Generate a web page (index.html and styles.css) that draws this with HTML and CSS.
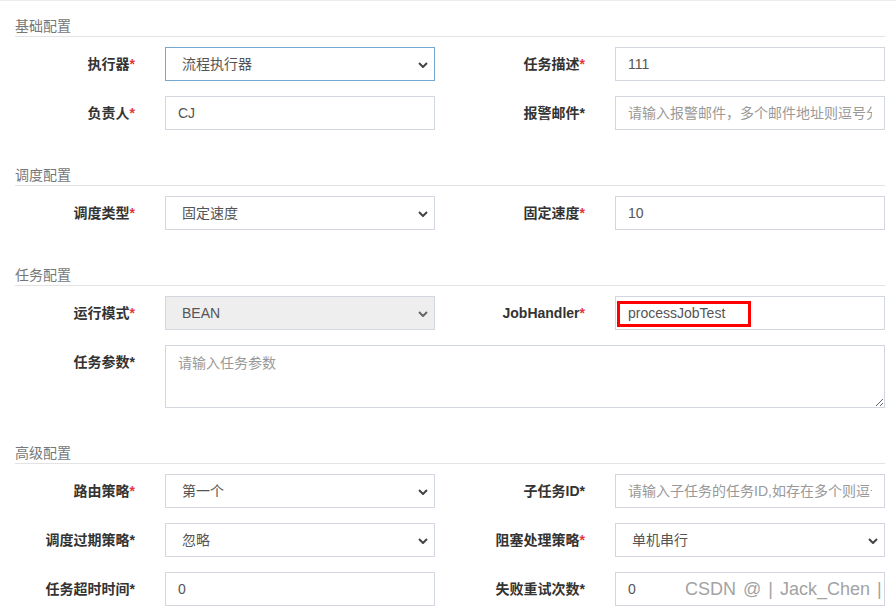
FILE: index.html
```html
<!DOCTYPE html>
<html lang="zh-CN">
<head>
<meta charset="utf-8">
<title>任务配置</title>
<link rel="stylesheet" href="styles.css">
</head>
<body>
<form class="form">
  <div class="section-title">基础配置</div>
  <div class="row">
    <div class="group">
      <label class="label">执行器<span class="req">*</span></label>
      <div class="control">
        <select class="input select focused"><option>流程执行器</option></select>
        <svg class="caret" width="10" height="6" viewBox="0 0 10 6"><path d="M1 1 L5 5 L9 1" fill="none" stroke="#444" stroke-width="2"/></svg>
      </div>
    </div>
    <div class="group">
      <label class="label">任务描述<span class="req">*</span></label>
      <div class="control"><input class="input" type="text" value="111"></div>
    </div>
  </div>
  <div class="row">
    <div class="group">
      <label class="label">负责人<span class="req">*</span></label>
      <div class="control"><input class="input" type="text" value="CJ"></div>
    </div>
    <div class="group">
      <label class="label">报警邮件<span>*</span></label>
      <div class="control"><input class="input" type="text" placeholder="请输入报警邮件，多个邮件地址则逗号分隔"></div>
    </div>
  </div>

  <div class="section-title">调度配置</div>
  <div class="row">
    <div class="group">
      <label class="label">调度类型<span class="req">*</span></label>
      <div class="control">
        <select class="input select"><option>固定速度</option></select>
        <svg class="caret" width="10" height="6" viewBox="0 0 10 6"><path d="M1 1 L5 5 L9 1" fill="none" stroke="#444" stroke-width="2"/></svg>
      </div>
    </div>
    <div class="group">
      <label class="label">固定速度<span class="req">*</span></label>
      <div class="control"><input class="input" type="text" value="10"></div>
    </div>
  </div>

  <div class="section-title">任务配置</div>
  <div class="row">
    <div class="group">
      <label class="label">运行模式<span class="req">*</span></label>
      <div class="control">
        <select class="input select" disabled><option>BEAN</option></select>
        <svg class="caret" width="10" height="6" viewBox="0 0 10 6"><path d="M1 1 L5 5 L9 1" fill="none" stroke="#666" stroke-width="2"/></svg>
      </div>
    </div>
    <div class="group">
      <label class="label">JobHandler<span class="req">*</span></label>
      <div class="control">
        <input class="input" type="text" value="processJobTest">
        <div class="highlight"></div>
      </div>
    </div>
  </div>
  <div class="row">
    <div class="group wide">
      <label class="label">任务参数<span>*</span></label>
      <div class="control"><textarea class="input textarea" placeholder="请输入任务参数"></textarea></div>
    </div>
  </div>

  <div class="section-title">高级配置</div>
  <div class="row">
    <div class="group">
      <label class="label">路由策略<span class="req">*</span></label>
      <div class="control">
        <select class="input select"><option>第一个</option></select>
        <svg class="caret" width="10" height="6" viewBox="0 0 10 6"><path d="M1 1 L5 5 L9 1" fill="none" stroke="#444" stroke-width="2"/></svg>
      </div>
    </div>
    <div class="group">
      <label class="label">子任务ID<span>*</span></label>
      <div class="control"><input class="input" type="text" placeholder="请输入子任务的任务ID,如存在多个则逗号分隔"></div>
    </div>
  </div>
  <div class="row">
    <div class="group">
      <label class="label">调度过期策略<span>*</span></label>
      <div class="control">
        <select class="input select"><option>忽略</option></select>
        <svg class="caret" width="10" height="6" viewBox="0 0 10 6"><path d="M1 1 L5 5 L9 1" fill="none" stroke="#444" stroke-width="2"/></svg>
      </div>
    </div>
    <div class="group">
      <label class="label">阻塞处理策略<span class="req">*</span></label>
      <div class="control">
        <select class="input select"><option>单机串行</option></select>
        <svg class="caret" width="10" height="6" viewBox="0 0 10 6"><path d="M1 1 L5 5 L9 1" fill="none" stroke="#444" stroke-width="2"/></svg>
      </div>
    </div>
  </div>
  <div class="row">
    <div class="group">
      <label class="label">任务超时时间<span>*</span></label>
      <div class="control"><input class="input" type="text" value="0"></div>
    </div>
    <div class="group">
      <label class="label">失败重试次数<span>*</span></label>
      <div class="control"><input class="input" type="text" value="0"></div>
    </div>
  </div>
</form>
<div class="watermark">CSDN @ | Jack_Chen |</div>
</body>
</html>
```

FILE: styles.css
```css
html, body {
  margin: 0;
  padding: 0;
  background: #fff;
}

body {
  font-family: "Liberation Sans", "Noto Sans CJK SC", sans-serif;
  font-size: 14px;
  color: #333;
  border-top: 1px solid #ececec;
  position: relative;
  height: 606px;
  overflow: hidden;
}

.form {
  display: flex;
  flex-direction: column;
  margin: 0;
}

.section-title {
  margin: 20px 11px 10px 15px;
  font-size: 14px;
  line-height: 20px;
  color: #777;
  border-bottom: 1px solid #e3e3e3;
}

.section-title:first-child {
  margin-top: 15px;
}

.row {
  display: flex;
  margin-bottom: 15px;
}

.group {
  display: flex;
  flex-shrink: 0;
  width: 450px;
}

.label {
  flex-shrink: 0;
  width: 135px;
  margin-right: 30px;
  text-align: right;
  font-weight: bold;
  font-size: 14px;
  line-height: 20px;
  padding-top: 7px;
  color: #333;
  white-space: nowrap;
}

.req {
  color: #e4393c;
}

.control {
  position: relative;
  flex-shrink: 0;
  width: 270px;
}

.group.wide {
  width: 885px;
}

.group.wide .control {
  width: 720px;
}

.input {
  display: block;
  width: 100%;
  height: 34px;
  box-sizing: border-box;
  margin: 0;
  padding: 6px 12px;
  border: 1px solid #d2d6de;
  border-radius: 0;
  background: #fff;
  font-family: "Liberation Sans", "Noto Sans CJK SC", sans-serif;
  font-size: 14px;
  color: #555;
  outline: none;
}

.input::placeholder {
  color: #999;
}

.select {
  -webkit-appearance: none;
  appearance: none;
  padding-left: 16px;
}

.select:disabled {
  background: #eee;
  color: #555;
  opacity: 1;
}

.select.focused {
  border-color: #76a8cf;
}

.caret {
  position: absolute;
  right: 7px;
  top: 15px;
  pointer-events: none;
}

.textarea {
  height: 63px;
  resize: vertical;
}

.highlight {
  position: absolute;
  left: 2px;
  top: 5px;
  width: 134px;
  height: 26px;
  box-sizing: border-box;
  border: 3px solid #f00;
  pointer-events: none;
}

.watermark {
  position: absolute;
  left: 685px;
  top: 576px;
  font-family: "Liberation Sans", sans-serif;
  font-size: 18px;
  line-height: 24px;
  word-spacing: 2px;
  color: #a3a3a3;
  white-space: nowrap;
  pointer-events: none;
}
```
